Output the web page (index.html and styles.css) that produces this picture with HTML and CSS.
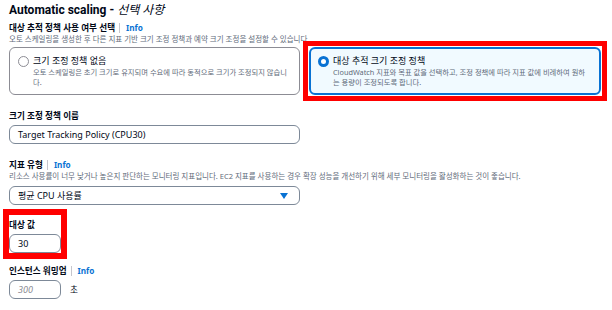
FILE: index.html
```html
<!DOCTYPE html>
<html lang="ko">
<head>
    <meta charset="UTF-8">
    <title>Automatic scaling</title>
    <link rel="stylesheet" href="styles.css">
</head>
<body>
    <div class="panel">
        <h2 class="title">Automatic scaling - <em>선택 사항</em></h2>

        <div class="label">대상 추적 정책 사용 여부 선택 <span class="sep"></span><a class="info">Info</a></div>
        <div class="desc">오토 스케일링을 생성한 후 다른 지표 기반 크기 조정 정책과 예약 크기 조정을 설정할 수 있습니다.</div>

        <div class="tiles">
            <div class="tile">
                <span class="radio"></span>
                <div class="tile-body">
                    <div class="tile-title">크기 조정 정책 없음</div>
                    <div class="tile-desc">오토 스케일링은 초기 크기로 유지되며 수요에 따라 동적으로 크기가 조정되지 않습니<br>다.</div>
                </div>
            </div>
            <div class="marked">
                <div class="tile tile-on">
                    <span class="radio radio-on"></span>
                    <div class="tile-body">
                        <div class="tile-title">대상 추적 크기 조정 정책</div>
                        <div class="tile-desc">CloudWatch 지표와 목표 값을 선택하고, 조정 정책에 따라 지표 값에 비례하여 원하<br>는 용량이 조정되도록 합니다.</div>
                    </div>
                </div>
            </div>
        </div>

        <div class="field">
            <div class="label">크기 조정 정책 이름</div>
            <div class="input wide">Target Tracking Policy (CPU30)</div>
        </div>

        <div class="field">
            <div class="label">지표 유형 <span class="sep"></span><a class="info">Info</a></div>
            <div class="desc">리소스 사용률이 너무 낮거나 높은지 판단하는 모니터링 지표입니다. EC2 지표를 사용하는 경우 확장 성능을 개선하기 위해 세부 모니터링을 활성화하는 것이 좋습니다.</div>
            <div class="input wide select">
                <span>평균 CPU 사용률</span>
                <svg class="caret" width="8" height="6" viewBox="0 0 8 6"><path d="M0 0 H8 L4 6 Z" fill="#0972d3"/></svg>
            </div>
        </div>

        <div class="field target marked-small">
            <div class="label">대상 값</div>
            <div class="input short">30</div>
        </div>

        <div class="field warmup">
            <div class="label">인스턴스 워밍업 <span class="sep"></span><a class="info">Info</a></div>
            <div class="row">
                <div class="input short placeholder">300</div>
                <span class="unit">초</span>
            </div>
        </div>
    </div>
</body>
</html>
```

FILE: styles.css
```css
body {
    margin: 0;
    background: #fff;
    color: #000716;
    font-family: 'Noto Sans', 'Noto Sans CJK KR', sans-serif;
}
.panel {
    padding: 0 9px;
}
.title {
    margin: 0;
    padding-top: 2px;
    font-family: Roboto, 'Noto Sans CJK KR', sans-serif;
    font-size: 12px;
    line-height: 16px;
    font-weight: 700;
}
.title em {
    font-weight: 400;
}
.label {
    font-size: 8.6px;
    font-weight: 700;
    line-height: 12px;
    display: flex;
    align-items: center;
    margin-top: 4px;
}
.sep {
    display: inline-block;
    width: 1px;
    height: 10px;
    background: #c6c6cd;
    margin: 0 6px 0 4px;
}
.info {
    color: #0972d3;
    font-size: 8.2px;
}
.desc {
    font-size: 7.5px;
    line-height: 11px;
    color: #5f6b7a;
    white-space: nowrap;
}
.tiles {
    display: grid;
    grid-template-columns: 291px 292px;
    gap: 9px;
    margin-top: 2px;
}
.tile {
    display: flex;
    gap: 4px;
    height: 48px;
    box-sizing: border-box;
    border: 1px solid #8c8c94;
    border-radius: 6px;
    padding: 7px 8px;
}
.tile-on {
    border: 2px solid #0972d3;
    background: #f1faff;
    padding: 6px 7px;
}
.radio {
    flex: none;
    width: 11px;
    height: 11px;
    box-sizing: border-box;
    border: 1px solid #8c8c94;
    border-radius: 50%;
    margin-top: 1px;
}
.radio-on {
    border: 3.5px solid #0972d3;
    background: #fff;
}
.tile-title {
    font-size: 9px;
    line-height: 12px;
}
.tile-desc {
    font-size: 7.3px;
    line-height: 10px;
    color: #5f6b7a;
    white-space: nowrap;
}
.marked {
    outline: 5px solid #ff0000;
    outline-offset: 1px;
}
.field {
    margin-top: 15px;
}
.field .label {
    margin-top: 0;
    margin-bottom: 3px;
}
.field .desc {
    margin-top: -3px;
    margin-bottom: 4px;
}
.input {
    box-sizing: border-box;
    height: 19px;
    border: 1px solid #7d8998;
    border-radius: 6px;
    padding: 0 8px;
    font-size: 9px;
    line-height: 17px;
}
.wide {
    width: 291px;
}
.short {
    width: 52px;
}
.select {
    display: flex;
    justify-content: space-between;
    align-items: center;
}
.caret {
    margin-right: 3px;
}
.placeholder {
    color: #8c8c94;
    font-style: italic;
}
.target {
    width: 52px;
    margin-top: 10px;
    padding-top: 4px;
}
.warmup {
    margin-top: 12px;
}
.marked-small {
    outline: 6px solid #ff0000;
    outline-offset: 0;
}
.row {
    display: flex;
    align-items: center;
    gap: 9px;
}
.unit {
    font-size: 8.6px;
}
```
